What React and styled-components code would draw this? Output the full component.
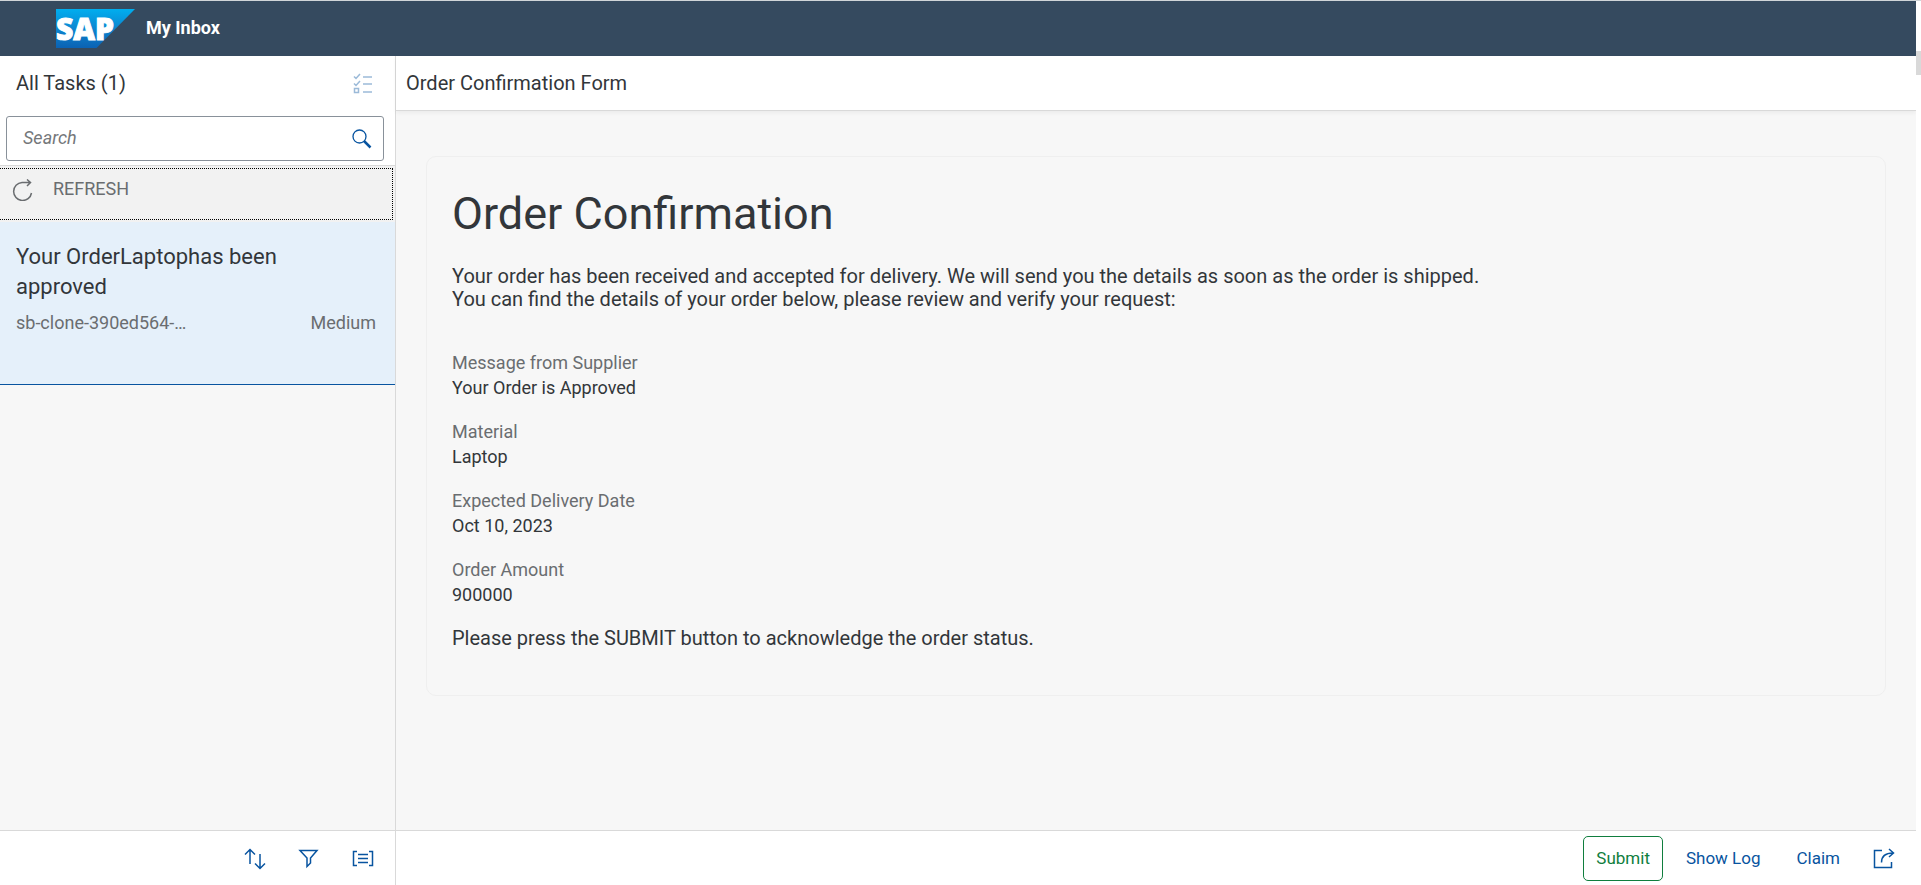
import React from "react";
import styled, { createGlobalStyle } from "styled-components";

const GlobalStyle = createGlobalStyle`
  *, *::before, *::after { box-sizing: border-box; }
  body {
    margin: 0;
    background: #f7f7f7;
    color: #32363a;
    font-family: Roboto, "Liberation Sans", sans-serif;
    font-size: 18px;
  }
  h1, h2, h3, p, dl, dd, ul { margin: 0; padding: 0; font-weight: 400; }
  button, input { font: inherit; color: inherit; }
`;

const Window = styled.div`
  display: flex;
  min-height: 100vh;
  border-top: 1px solid #d0d5d8;
`;

const Shell = styled.div`
  flex: 1;
  min-width: 0;
  display: flex;
  flex-direction: column;
`;

const ScrollTrack = styled.div`
  width: 5px;
  padding-top: 50px;
  background: #fff;
`;

const ScrollThumb = styled.div`
  height: 24px;
  background: #d9d9d9;
`;

const ShellHeader = styled.header`
  display: flex;
  align-items: center;
  gap: 11px;
  height: 55px;
  padding-left: 56px;
  background: #354a5f;
  color: #fff;
`;

const AppTitle = styled.h1`
  padding-bottom: 2px;
  font-size: 18px;
  line-height: 24px;
  font-weight: 700;
`;

const Columns = styled.div`
  flex: 1;
  display: flex;
`;

const Master = styled.aside`
  width: 396px;
  flex: none;
  display: flex;
  flex-direction: column;
  border-right: 1px solid #d9d9d9;
`;

const Detail = styled.main`
  flex: 1;
  min-width: 0;
  display: flex;
  flex-direction: column;
`;

const MasterHead = styled.div`
  padding-bottom: 4px;
  background: #fff;
  border-bottom: 1px solid #d9d9d9;
`;

const TitleBar = styled.div`
  display: flex;
  align-items: center;
  justify-content: space-between;
  height: ${(p) => (p.$ruled ? 55 : 54)}px;
  padding: 0 11px 0 ${(p) => (p.$ruled ? 10 : 16)}px;
  background: #fff;
  border-bottom: ${(p) => (p.$ruled ? "1px solid #d9d9d9" : "0")};
  box-shadow: ${(p) => (p.$ruled ? "0 2px 4px rgba(0, 0, 0, 0.05)" : "none")};
`;

const BarTitle = styled.h2`
  font-size: 20px;
  line-height: 24px;
`;

const IconButton = styled.button`
  display: flex;
  align-items: center;
  justify-content: center;
  width: 42px;
  height: 45px;
  padding: 0;
  border: 0;
  background: none;
  color: #0854a0;
  opacity: ${(p) => (p.disabled ? 0.4 : 1)};
`;

const SearchBox = styled.form`
  display: flex;
  align-items: center;
  height: 45px;
  margin: 6px 11px 0 6px;
  padding-left: 16px;
  border: 1px solid #89919a;
  border-radius: 3px;
`;

const SearchInput = styled.input`
  flex: 1;
  min-width: 0;
  padding: 0 0 2px;
  border: 0;
  outline: 0;
  background: none;
  &::placeholder {
    color: #74777a;
    font-style: italic;
    opacity: 1;
  }
`;

const RefreshArea = styled.div`
  padding: 2px 2px 2px 0;
  background: #f2f2f2;
`;

const RefreshButton = styled.button`
  display: flex;
  align-items: flex-start;
  gap: 20px;
  width: 100%;
  height: 52px;
  padding: 10px 11px;
  border: 1px dotted #000;
  border-left: 0;
  background: none;
  color: #6a6d70;
  line-height: 20px;
  text-align: left;
`;

const TaskList = styled.ul`
  list-style: none;
`;

const Task = styled.li`
  min-height: 163px;
  padding: 20px 19px 0 16px;
  background: #e5f0fa;
  border-bottom: 1px solid #0854a0;
`;

const TaskTitle = styled.h3`
  max-width: 300px;
  font-size: 22px;
  line-height: 30px;
`;

const TaskMeta = styled.div`
  display: flex;
  justify-content: space-between;
  margin-top: 9px;
  color: #6a6d70;
  line-height: 24px;
`;

const Toolbar = styled.footer`
  display: flex;
  justify-content: flex-end;
  align-items: center;
  gap: ${(p) => p.$gap}px;
  margin-top: auto;
  padding: 5px 11px 4px;
  background: #fff;
  border-top: 1px solid #d9d9d9;
`;

const TextButton = styled.button`
  height: 45px;
  padding: 0 12px 2px;
  border: 1px solid ${(p) => (p.$accept ? "#107e3e" : "transparent")};
  border-radius: 5px;
  background: #fff;
  color: ${(p) => (p.$accept ? "#107e3e" : "#0854a0")};
  font-size: 17px;
`;

const Card = styled.section`
  margin: 45px 30px;
  padding: 30px 25px 45px;
  border: 1px solid #efefef;
  border-radius: 10px;
`;

const CardTitle = styled.h2`
  font-size: 45px;
  line-height: 54px;
`;

const Paragraph = styled.p`
  margin-top: ${(p) => p.$top}px;
  font-size: 20px;
  line-height: 23px;
`;

const Fields = styled.dl`
  display: grid;
  gap: 19px;
  margin-top: 39px;
  line-height: 25px;
`;

const FieldLabel = styled.dt`
  color: #6a6d70;
`;

const Icon = ({ children }) => (
  <svg
    width="22"
    height="22"
    viewBox="0 0 22 22"
    fill="none"
    stroke="currentColor"
    strokeWidth="1.5"
    aria-hidden="true"
  >
    {children}
  </svg>
);

const LogoMark = styled.svg`
  overflow: visible;
`;

const Logo = () => (
  <LogoMark width="79" height="39" viewBox="0 0 79 39" role="img" aria-label="SAP">
    <defs>
      <linearGradient id="sap" x1="0" y1="0" x2="0" y2="1">
        <stop offset="0" stopColor="#00aeef" />
        <stop offset="0.5" stopColor="#0d86d0" />
        <stop offset="1" stopColor="#0b62b3" />
      </linearGradient>
    </defs>
    <path d="M0 0H79L40.500 39H0Z" fill="url(#sap)" />
    <text
      x="0"
      y="31"
      fill="#fff"
      stroke="#fff"
      strokeWidth="1"
      fontFamily="Open Sans, sans-serif"
      fontWeight="800"
      fontSize="30"
    >
      SAP
    </text>
  </LogoMark>
);

const fields = [
  ["Message from Supplier", "Your Order is Approved"],
  ["Material", "Laptop"],
  ["Expected Delivery Date", "Oct 10, 2023"],
  ["Order Amount", "900000"],
];

export default function App() {
  return (
    <>
      <GlobalStyle />
      <Window>
        <Shell>
          <ShellHeader>
            <Logo />
            <AppTitle>My Inbox</AppTitle>
          </ShellHeader>
          <Columns>
            <Master>
              <MasterHead>
                <TitleBar>
                  <BarTitle>All Tasks (1)</BarTitle>
                  <IconButton disabled aria-label="Multi-select">
                    <Icon>
                      <path d="M2 4.500L4 6.500L8 2M2 11.500L4 13.500L8 9M2.500 16.500H6.500V20.500H2.500ZM11 5H20M11 12H20M11 20H20" />
                    </Icon>
                  </IconButton>
                </TitleBar>
                <SearchBox onSubmit={(e) => e.preventDefault()}>
                  <SearchInput type="search" placeholder="Search" aria-label="Search" />
                  <IconButton aria-label="Start search">
                    <Icon>
                      <circle cx="8.500" cy="8.500" r="6.500" strokeWidth="1.300" />
                      <path d="M13 13L19.500 19.500" strokeWidth="2.500" />
                    </Icon>
                  </IconButton>
                </SearchBox>
              </MasterHead>
              <RefreshArea>
                <RefreshButton>
                  <Icon>
                    <path d="M19.500 3.500H11A9 9 0 1 0 20.500 14M16 0.500L19.500 3.500L16 7" />
                  </Icon>
                  REFRESH
                </RefreshButton>
              </RefreshArea>
              <TaskList>
                <Task>
                  <TaskTitle>Your OrderLaptophas been approved</TaskTitle>
                  <TaskMeta>
                    <span>sb-clone-390ed564-…</span>
                    <span>Medium</span>
                  </TaskMeta>
                </Task>
              </TaskList>
              <Toolbar $gap={12}>
                <IconButton aria-label="Sort">
                  <Icon>
                    <path d="M6 16V1.500M1 6.500L6 1.500L11 6.500M16 6V20.500M11 15.500L16 20.500L21 15.500" />
                  </Icon>
                </IconButton>
                <IconButton aria-label="Filter">
                  <Icon>
                    <path d="M2 2.500H19L12.500 10V15L9 18.500V10Z" />
                  </Icon>
                </IconButton>
                <IconButton aria-label="Group">
                  <Icon>
                    <path d="M5 3.500H1.500V17.500H5M17 3.500H20.500V17.500H17M6 6.500H16M6 10.500H16M6 14.500H16" />
                  </Icon>
                </IconButton>
              </Toolbar>
            </Master>
            <Detail>
              <TitleBar $ruled>
                <BarTitle>Order Confirmation Form</BarTitle>
              </TitleBar>
              <Card>
                <CardTitle>Order Confirmation</CardTitle>
                <Paragraph $top={24}>
                  Your order has been received and accepted for delivery. We will send you the
                  details as soon as the order is shipped.
                  <br />
                  You can find the details of your order below, please review and verify your
                  request:
                </Paragraph>
                <Fields>
                  {fields.map(([label, value]) => (
                    <div key={label}>
                      <FieldLabel>{label}</FieldLabel>
                      <dd>{value}</dd>
                    </div>
                  ))}
                </Fields>
                <Paragraph $top={20}>
                  Please press the SUBMIT button to acknowledge the order status.
                </Paragraph>
              </Card>
              <Toolbar $gap={10}>
                <TextButton $accept>Submit</TextButton>
                <TextButton>Show Log</TextButton>
                <TextButton>Claim</TextButton>
                <IconButton aria-label="Share">
                  <Icon>
                    <path d="M9 2.500H1.500V19.500H18.500V14M8.500 14.500C8.500 8.500 12 5 20 5M16 1L20.500 5L16 9" />
                  </Icon>
                </IconButton>
              </Toolbar>
            </Detail>
          </Columns>
        </Shell>
        <ScrollTrack>
          <ScrollThumb />
        </ScrollTrack>
      </Window>
    </>
  );
}
